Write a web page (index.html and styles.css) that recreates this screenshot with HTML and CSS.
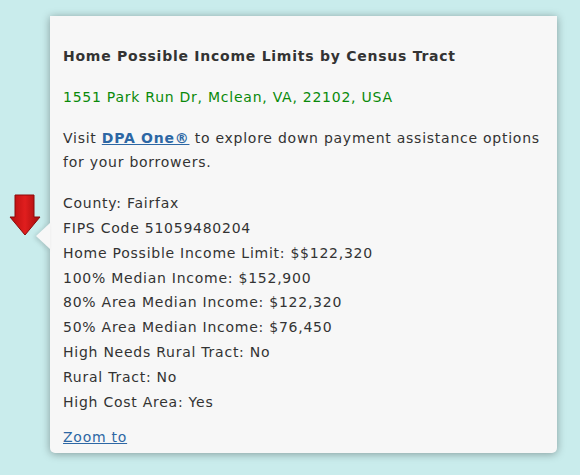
FILE: index.html
```html
<!DOCTYPE html>
<html>
<head>
<meta charset="utf-8">
<link rel="stylesheet" href="styles.css">
</head>
<body>
<div class="stage">
  <svg class="marker" width="32" height="44" viewBox="0 0 32 44">
    <defs>
      <linearGradient id="g" x1="0" y1="0" x2="1" y2="0">
        <stop offset="0" stop-color="#b50d0d"/>
        <stop offset="0.5" stop-color="#e01e1e"/>
        <stop offset="1" stop-color="#a30b0b"/>
      </linearGradient>
    </defs>
    <path d="M5 1 H24 V23 H30 L15 41 L0 23 H5 Z" transform="translate(1,0)" fill="url(#g)" stroke="#8a0a0a" stroke-width="1"/>
  </svg>
  <div class="popup">
    <div class="content">
      <p class="title">Home Possible Income Limits by Census Tract</p>
      <p class="address">1551 Park Run Dr, Mclean, VA, 22102, USA</p>
      <p class="visit">Visit <a href="#" class="strong-link">DPA One®</a> to explore down payment assistance options for your borrowers.</p>
      <div class="facts">
        <div>County: Fairfax</div>
        <div>FIPS Code 51059480204</div>
        <div>Home Possible Income Limit: $$122,320</div>
        <div>100% Median Income: $152,900</div>
        <div>80% Area Median Income: $122,320</div>
        <div>50% Area Median Income: $76,450</div>
        <div>High Needs Rural Tract: No</div>
        <div>Rural Tract: No</div>
        <div>High Cost Area: Yes</div>
      </div>
      <a href="#" class="zoom">Zoom to</a>
    </div>
  </div>
</div>
</body>
</html>
```

FILE: styles.css
```css
html, body {
  margin: 0;
  padding: 0;
}
body {
  background: #c9ecec;
  width: 580px;
  height: 475px;
  overflow: hidden;
  font-family: "DejaVu Sans", Verdana, sans-serif;
  font-size: 14px;
  letter-spacing: 0.75px;
  color: #333333;
}
.stage {
  position: relative;
  width: 580px;
  height: 475px;
  padding-top: 16px;
  box-sizing: border-box;
}
.marker {
  position: absolute;
  left: 9px;
  top: 194px;
}
.popup {
  position: relative;
  margin-left: 50px;
  width: 507px;
  height: 437px;
  background: #f7f7f7;
  border-radius: 0 0 5px 5px;
  box-shadow: 0 1px 8px rgba(0, 0, 0, 0.35);
}
.popup::before {
  content: "";
  position: absolute;
  left: -14px;
  top: 207px;
  width: 0;
  height: 0;
  border-top: 13px solid transparent;
  border-bottom: 13px solid transparent;
  border-right: 14px solid #f7f7f7;
  filter: drop-shadow(-2px 1px 2px rgba(0,0,0,0.15));
}
.content {
  padding: 28px 13px 0 13px;
  line-height: 24.8px;
}
.content p {
  margin: 0 0 16px 0;
}
.title {
  font-weight: bold;
}
.address {
  color: #0a8a0a;
}
.strong-link {
  color: #2d67a4;
  font-weight: bold;
}
.facts {
  margin-bottom: 11px;
}
.zoom {
  color: #2d67a4;
}
```
